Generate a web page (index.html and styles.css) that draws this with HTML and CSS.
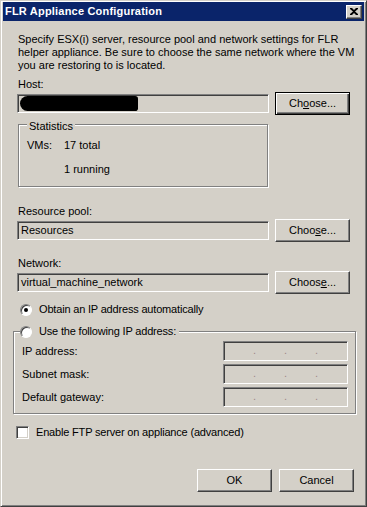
FILE: index.html
```html
<!DOCTYPE html>
<html lang="en">
<head>
    <meta charset="UTF-8">
    <title>FLR Appliance Configuration</title>
    <link rel="stylesheet" href="styles.css">
</head>
<body>
    <div class="window">
        <div class="titlebar">
            <span class="title">FLR Appliance Configuration</span>
            <span class="close-btn">
                <svg width="8" height="7" viewBox="0 0 8 7"><path d="M0 0h2l2 2 2-2h2v1L5 3.5 8 6v1H6L4 5 2 7H0V6l3-2.5L0 1z" fill="#000"/></svg>
            </span>
        </div>

        <div class="content">
            <p class="intro">Specify ESX(i) server, resource pool and network settings for FLR helper appliance. Be sure to choose the same network where the VM you are restoring to is located.</p>

            <div class="label label-host">Host:</div>
            <div class="field-row">
                <div class="textbox"><span class="redacted"></span></div>
                <button class="btn btn-default">Ch<u>o</u>ose...</button>
            </div>

            <div class="groupbox stats">
                <span class="legend">Statistics</span>
                <div class="stats-grid">
                    <span>VMs:</span><span>17 total</span>
                    <span></span><span>1 running</span>
                </div>
            </div>

            <div class="label label-pool">Resource pool:</div>
            <div class="field-row">
                <div class="textbox">Resources</div>
                <button class="btn">Choo<u>s</u>e...</button>
            </div>

            <div class="label label-net">Network:</div>
            <div class="field-row row-net">
                <div class="textbox">virtual_machine_network</div>
                <button class="btn">Choos<u>e</u>...</button>
            </div>

            <div class="option auto-ip">
                <span class="radio checked"><span class="dot"></span></span>
                <span>Obtain an IP address automatically</span>
            </div>

            <div class="groupbox ip-box">
                <div class="option legend">
                    <span class="radio"></span>
                    <span>Use the following IP address:</span>
                </div>
                <div class="ip-row">
                    <span>IP address:</span>
                    <div class="ip-input"><i>.</i><i>.</i><i>.</i></div>
                </div>
                <div class="ip-row">
                    <span>Subnet mask:</span>
                    <div class="ip-input"><i>.</i><i>.</i><i>.</i></div>
                </div>
                <div class="ip-row">
                    <span>Default gateway:</span>
                    <div class="ip-input"><i>.</i><i>.</i><i>.</i></div>
                </div>
            </div>

            <div class="option ftp">
                <span class="checkbox"></span>
                <span>Enable FTP server on appliance (advanced)</span>
            </div>

            <div class="footer">
                <button class="btn">OK</button>
                <button class="btn">Cancel</button>
            </div>
        </div>
    </div>
</body>
</html>
```

FILE: styles.css
```css
* {
    margin: 0;
    padding: 0;
    box-sizing: border-box;
}

body {
    font-family: "Liberation Sans", Arial, sans-serif;
    font-size: 11px;
    line-height: 13px;
    color: #000;
    background: #d4d0c8;
}

.window {
    width: 367px;
    height: 507px;
    background: #d4d0c8;
    border: 1px solid;
    border-color: #d4d0c8 #404040 #404040 #d4d0c8;
    box-shadow: inset 1px 1px #fff, inset -1px -1px #808080;
    padding: 1px 2px 2px 2px;
}

.titlebar {
    height: 19px;
    background: #0a246a;
    display: flex;
    align-items: center;
    justify-content: space-between;
    padding: 0 2px 0 2px;
}

.title {
    color: #fff;
    font-weight: bold;
    font-size: 11px;
    letter-spacing: 0.2px;
}

.close-btn {
    width: 16px;
    height: 14px;
    background: #d4d0c8;
    border: 1px solid;
    border-color: #fff #404040 #404040 #fff;
    box-shadow: inset -1px -1px #808080;
    display: flex;
    align-items: center;
    justify-content: center;
    padding-bottom: 1px;
}

.content {
    padding: 0 14px 0 15px;
}

.intro {
    margin: 12px -12px 0 0;
}

.label-host {
    margin-top: 6px;
}

.label-pool {
    margin-top: 18px;
}

.label-net {
    margin-top: 15px;
}

.field-row {
    display: flex;
    align-items: center;
    gap: 6px;
    margin-top: 1px;
    margin-left: -1px;
}

.textbox {
    flex: 1;
    height: 19px;
    background: #d4d0c8;
    border: 1px solid;
    border-color: #808080 #fff #fff #808080;
    box-shadow: inset 1px 1px #404040, inset -1px -1px #d4d0c8;
    padding: 2px 0 0 3px;
    white-space: nowrap;
}

.redacted {
    display: block;
    width: 118px;
    height: 15px;
    margin: -1px 0 0 -1px;
    background: #000;
    border-radius: 8px 3px 3px 8px;
}

.btn {
    font-family: inherit;
    font-size: 11px;
    line-height: 13px;
    width: 75px;
    height: 23px;
    background: #d4d0c8;
    color: #000;
    border: 1px solid;
    border-color: #fff #404040 #404040 #fff;
    box-shadow: inset -1px -1px #808080;
}

.btn-default {
    border-color: #000;
    box-shadow: inset 1px 1px #fff, inset -1px -1px #404040, inset -2px -2px #808080;
}

.groupbox {
    border: 1px solid #808080;
    box-shadow: inset 1px 1px #fff, 1px 1px #fff;
}

.groupbox .legend {
    display: block;
    width: fit-content;
    background: #d4d0c8;
}

.stats {
    width: 250px;
    height: 63px;
    margin-top: 9px;
}

.stats .legend {
    margin: -5px 0 0 8px;
    padding: 0 2px;
}

.stats-grid {
    display: grid;
    grid-template-columns: 37px auto;
    row-gap: 11px;
    padding-left: 8px;
    margin-top: 6px;
}

.option {
    display: flex;
    align-items: center;
    gap: 7px;
    letter-spacing: -0.18px;
}

.auto-ip {
    margin-top: 9px;
    padding-left: 2px;
}

.radio {
    width: 12px;
    height: 12px;
    border-radius: 50%;
    background: #fff;
    border: 1px solid;
    border-color: #808080 #fff #fff #808080;
    box-shadow: inset 1px 1px #404040;
    display: flex;
    align-items: center;
    justify-content: center;
}

.dot {
    width: 4px;
    height: 4px;
    border-radius: 50%;
    background: #000;
}

.ip-box {
    margin: 15px -6px 0 -5px;
    padding: 0 7px 6px 8px;
}

.ip-box .legend {
    margin: -7px 0 0 -2px;
    padding: 0 3px 0 0;
    display: flex;
}

.ip-row {
    display: flex;
    align-items: center;
    justify-content: space-between;
    height: 20px;
    margin-top: 3px;
}

.ip-row:first-of-type {
    margin-top: 2px;
}

.ip-input {
    width: 125px;
    height: 20px;
    border: 1px solid;
    border-color: #808080 #fff #fff #808080;
    box-shadow: inset 1px 1px #404040, inset -1px -1px #d4d0c8;
    display: flex;
    justify-content: space-around;
    padding: 0 15px 0 15px;
}

.ip-input i {
    font-style: normal;
    color: #a08888;
    line-height: 16px;
}

.checkbox {
    width: 13px;
    height: 13px;
    background: #fff;
    border: 1px solid;
    border-color: #808080 #fff #fff #808080;
    box-shadow: inset 1px 1px #404040, inset -1px -1px #d4d0c8;
}

.ftp {
    margin-top: 12px;
    margin-left: -2px;
}

.footer {
    display: flex;
    justify-content: flex-end;
    gap: 7px;
    margin: 30px -4px 0 0;
}
```
